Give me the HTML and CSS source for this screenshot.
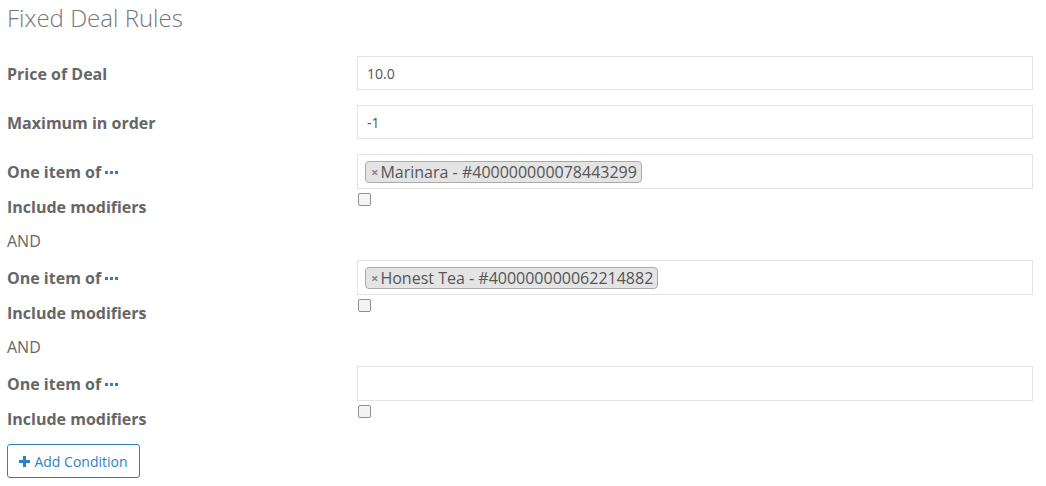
FILE: index.html
```html
<!DOCTYPE html>
<html>
<head>
<meta charset="utf-8">
<link rel="stylesheet" href="styles.css">
</head>
<body>
<div class="page">
  <h3 class="title">Fixed Deal Rules</h3>
  <div class="form">
    <div class="row field">
      <label class="lbl">Price of Deal</label>
      <div class="input"><span class="val">10.0</span></div>
    </div>
    <div class="row field">
      <label class="lbl">Maximum in order</label>
      <div class="input"><span class="val">-1</span></div>
    </div>

    <div class="row item">
      <label class="lbl">One item of <svg class="dots" width="13" height="3" viewBox="0 0 13 3"><rect x="0" y="0" width="3" height="3"/><rect x="5" y="0" width="3" height="3"/><rect x="10" y="0" width="3" height="3"/></svg></label>
      <div class="input tags"><span class="tag"><span class="x">×</span>Marinara - #400000000078443299</span></div>
    </div>
    <div class="row incl">
      <label class="lbl">Include modifiers</label>
      <div><span class="cb"></span></div>
    </div>
    <div class="row and"><span class="andtxt">AND</span></div>

    <div class="row item">
      <label class="lbl">One item of <svg class="dots" width="13" height="3" viewBox="0 0 13 3"><rect x="0" y="0" width="3" height="3"/><rect x="5" y="0" width="3" height="3"/><rect x="10" y="0" width="3" height="3"/></svg></label>
      <div class="input tags"><span class="tag"><span class="x">×</span>Honest Tea - #400000000062214882</span></div>
    </div>
    <div class="row incl">
      <label class="lbl">Include modifiers</label>
      <div><span class="cb"></span></div>
    </div>
    <div class="row and"><span class="andtxt">AND</span></div>

    <div class="row item">
      <label class="lbl">One item of <svg class="dots" width="13" height="3" viewBox="0 0 13 3"><rect x="0" y="0" width="3" height="3"/><rect x="5" y="0" width="3" height="3"/><rect x="10" y="0" width="3" height="3"/></svg></label>
      <div class="input tags"></div>
    </div>
    <div class="row incl">
      <label class="lbl">Include modifiers</label>
      <div><span class="cb"></span></div>
    </div>
  </div>
  <button class="btn"><svg class="plus" width="11" height="11" viewBox="0 0 11 11"><rect x="4" y="0" width="3" height="11"/><rect x="0" y="4" width="11" height="3"/></svg>Add Condition</button>
</div>
</body>
</html>
```
FILE: styles.css
```css
html, body { margin: 0; padding: 0; background: #fff; }
body { font-family: "Open Sans", "Liberation Sans", sans-serif; color: #666; }
.page { padding: 3px 13px 0 7px; }
.title {
  margin: 0;
  font-size: 24px;
  font-weight: 300;
  line-height: 30px;
  color: #777;
}
.form { margin-top: 23px; }
.row {
  display: grid;
  grid-template-columns: 350px 1fr;
}
.lbl {
  font-size: 16px;
  font-weight: 700;
  color: #666;
  line-height: 20px;
  display: flex;
  align-items: center;
  gap: 4px;
}
.field { height: 34px; margin-bottom: 15px; }
.field .lbl { height: 35px; }
.input {
  border: 1px solid #e3e3e3;
  box-sizing: border-box;
  height: 34px;
  display: flex;
  align-items: center;
  padding: 0 9px;
  background: #fff;
}
.item .input { height: 35px; }
.val { font-size: 14px; color: #555; }
.item { height: 35px; }
.item .lbl { height: 35px; }
.dots { fill: #2f7fc4; margin-top: 2px; }
.tags { padding: 0 7px; }
.tag {
  display: inline-flex;
  align-items: center;
  height: 22px;
  box-sizing: border-box;
  border: 1px solid #aaa;
  border-radius: 4px;
  background: #e4e4e4;
  padding: 0 4px 0 5px;
  font-size: 16px;
  color: #555;
  line-height: 20px;
}
.x { font-size: 13px; font-weight: 700; color: #888; margin-right: 2px; }
.incl { height: 36px; }
.incl .lbl { padding-top: 8px; align-items: flex-start; }
.cb {
  display: block;
  width: 11px;
  height: 11px;
  margin: 4px 0 0 1px;
  border: 1px solid #8f8f8f;
  border-radius: 2px;
  background: #f4f4f4;
}
.and { height: 35px; }
.andtxt { font-size: 16px; color: #666; line-height: 20px; padding-top: 6px; }
.btn {
  margin-top: 7px;
  width: 133px;
  height: 34px;
  border: 1px solid #2f7fc4;
  border-radius: 3px;
  background: #fff;
  color: #2f7fc4;
  font-family: "Open Sans", "Liberation Sans", sans-serif;
  font-size: 14px;
  display: flex;
  align-items: center;
  justify-content: center;
  gap: 4px;
  padding: 0;
}
.plus { fill: #2f7fc4; }
```
